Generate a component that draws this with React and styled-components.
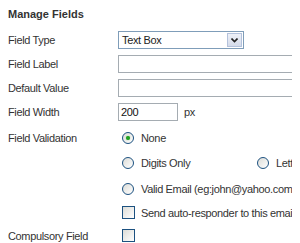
import React from "react";
import styled, { createGlobalStyle } from "styled-components";

const GlobalStyle = createGlobalStyle`
  body {
    margin: 8px;
    background: #ffffff;
    font-family: "Liberation Sans", Arial, sans-serif;
    font-size: 11px;
    letter-spacing: -0.35px;
    color: #333333;
    overflow: hidden;
  }
`;

const Panel = styled.div`
  width: 400px;
`;

const Title = styled.h3`
  margin: 1px 0 12px;
  font-size: 11px;
  line-height: 10px;
  font-weight: bold;
  letter-spacing: 0;
  color: #333333;
`;

const FieldList = styled.div`
  display: flex;
  flex-direction: column;
  gap: 6px;
`;

const Row = styled.div`
  display: flex;
  align-items: center;
  height: ${(p) => p.$h || 18}px;
  margin-top: ${(p) => p.$mt || 0}px;
`;

const Label = styled.div`
  width: 110px;
  flex: none;
`;

const Control = styled.div`
  display: flex;
  align-items: center;
`;

const Select = styled.div`
  position: relative;
  box-sizing: border-box;
  width: 126px;
  height: 18px;
  border: 1px solid #7f9db9;
  padding-left: 3px;
  display: flex;
  align-items: center;
  color: #222;
`;

const SelectButton = styled.span`
  position: absolute;
  right: 1px;
  top: 1px;
  width: 15px;
  height: 14px;
  box-sizing: border-box;
  border: 1px solid #b4c2dc;
  background: linear-gradient(#eef1f8, #d4dbea);
  display: flex;
  align-items: center;
  justify-content: center;
`;

const TextInput = styled.div`
  box-sizing: border-box;
  width: ${(p) => p.$w || 200}px;
  height: 18px;
  border: 1px solid #a5acb2;
  padding-left: 2px;
  display: flex;
  align-items: center;
  color: #111;
  flex: none;
`;

const Unit = styled.span`
  margin-left: 6px;
`;

const Option = styled.label`
  box-sizing: border-box;
  display: flex;
  align-items: center;
  width: ${(p) => (p.$w ? `${p.$w}px` : "auto")};
  padding-left: 4px;
  white-space: nowrap;
  flex: none;
`;

const Radio = styled.span`
  position: relative;
  box-sizing: border-box;
  width: 12px;
  height: 12px;
  border-radius: 50%;
  border: 1px solid #1c5180;
  background: linear-gradient(135deg, #dcdcd7, #ffffff);
  margin-right: 7px;
  flex: none;
  &::after {
    content: "";
    display: ${(p) => (p.$checked ? "block" : "none")};
    position: absolute;
    left: 3px;
    top: 3px;
    width: 4px;
    height: 4px;
    border-radius: 50%;
    background: #21a121;
    box-shadow: 0 0 1px #5ec35e;
  }
`;

const Check = styled.span`
  box-sizing: border-box;
  width: 13px;
  height: 13px;
  border: 1px solid #1c5180;
  background: linear-gradient(135deg, #dcdcd7, #ffffff);
  margin-right: 6px;
  flex: none;
`;

const App = () => (
  <>
    <GlobalStyle />
    <Panel>
      <Title>Manage Fields</Title>
      <FieldList>
        <Row>
          <Label>Field Type</Label>
          <Control>
            <Select>
              Text Box
              <SelectButton>
                <svg width="7" height="5" viewBox="0 0 7 5">
                  <path d="M0.5 0.5 L3.5 3.5 L6.5 0.5" fill="none" stroke="#222" strokeWidth="1.6" />
                </svg>
              </SelectButton>
            </Select>
          </Control>
        </Row>
        <Row>
          <Label>Field Label</Label>
          <TextInput />
        </Row>
        <Row>
          <Label>Default Value</Label>
          <TextInput />
        </Row>
        <Row>
          <Label>Field Width</Label>
          <Control>
            <TextInput $w={60}>200</TextInput>
            <Unit>px</Unit>
          </Control>
        </Row>
        <Row $h={19} $mt={1}>
          <Label>Field Validation</Label>
          <Option>
            <Radio $checked />
            None
          </Option>
        </Row>
        <Row $h={19}>
          <Label />
          <Option $w={135}>
            <Radio />
            Digits Only
          </Option>
          <Option>
            <Radio />
            Letters Only
          </Option>
        </Row>
        <Row $h={19} $mt={1}>
          <Label />
          <Option>
            <Radio />
            Valid Email (eg:john@yahoo.com)
          </Option>
        </Row>
        <Row $h={19} $mt={-1}>
          <Label />
          <Option>
            <Check />
            Send auto-responder to this email
          </Option>
        </Row>
        <Row $h={19} $mt={-2}>
          <Label>Compulsory Field</Label>
          <Option>
            <Check />
          </Option>
        </Row>
      </FieldList>
    </Panel>
  </>
);

export default App;
